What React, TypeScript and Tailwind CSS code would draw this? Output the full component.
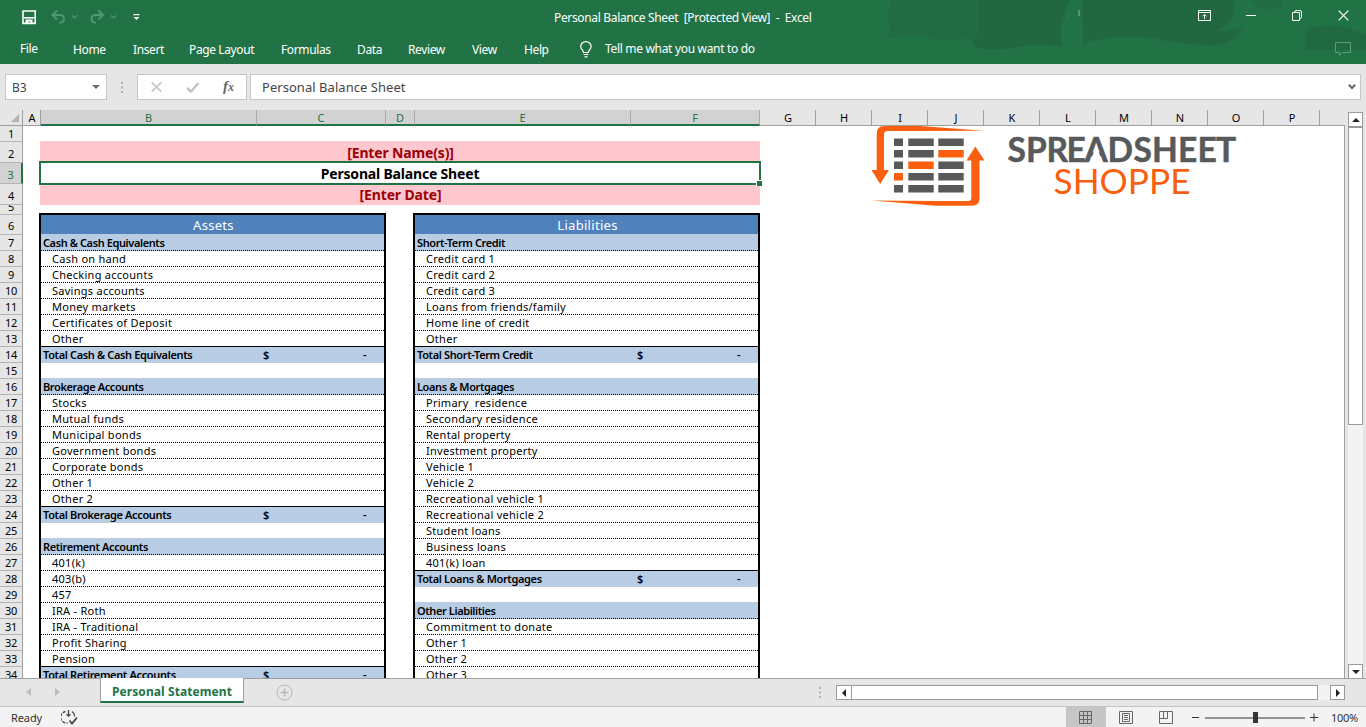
import React from "react";
import clsx from "clsx";

type RowKind = "head" | "item" | "last" | "total" | "blank";

interface ISheetRow {
  kind: RowKind;
  label?: string;
}

const section = (
  title: string,
  items: string[],
  total?: string
): ISheetRow[] => [
  { kind: "head", label: title },
  ...items.map((label, index) => ({
    kind: (total && index === items.length - 1 ? "last" : "item") as RowKind,
    label,
  })),
  ...(total
    ? [{ kind: "total" as RowKind, label: total }, { kind: "blank" as RowKind }]
    : []),
];

const assets: ISheetRow[] = [
  ...section(
    "Cash & Cash Equivalents",
    [
      "Cash on hand",
      "Checking accounts",
      "Savings accounts",
      "Money markets",
      "Certificates of Deposit",
      "Other",
    ],
    "Total Cash & Cash Equivalents"
  ),
  ...section(
    "Brokerage Accounts",
    [
      "Stocks",
      "Mutual funds",
      "Municipal bonds",
      "Government bonds",
      "Corporate bonds",
      "Other 1",
      "Other 2",
    ],
    "Total Brokerage Accounts"
  ),
  ...section(
    "Retirement Accounts",
    [
      "401(k)",
      "403(b)",
      "457",
      "IRA - Roth",
      "IRA - Traditional",
      "Profit Sharing",
      "Pension",
    ],
    "Total Retirement Accounts"
  ),
];

const liabilities: ISheetRow[] = [
  ...section(
    "Short-Term Credit",
    [
      "Credit card 1",
      "Credit card 2",
      "Credit card 3",
      "Loans from friends/family",
      "Home line of credit",
      "Other",
    ],
    "Total Short-Term Credit"
  ),
  ...section(
    "Loans & Mortgages",
    [
      "Primary  residence",
      "Secondary residence",
      "Rental property",
      "Investment property",
      "Vehicle 1",
      "Vehicle 2",
      "Recreational vehicle 1",
      "Recreational vehicle 2",
      "Student loans",
      "Business loans",
      "401(k) loan",
    ],
    "Total Loans & Mortgages"
  ),
  ...section("Other Liabilities", [
    "Commitment to donate",
    "Other 1",
    "Other 2",
    "Other 3",
  ]),
];

const menus = [
  { label: "File", width: "w-[53px]" },
  { label: "Home", width: "w-[60px]" },
  { label: "Insert", width: "w-[56px]" },
  { label: "Page Layout", width: "w-[92px]" },
  { label: "Formulas", width: "w-[76px]" },
  { label: "Data", width: "w-[51px]" },
  { label: "Review", width: "w-[64px]" },
  { label: "View", width: "w-[52px]" },
  { label: "Help", width: "w-[56px]" },
];

const columns = [
  { name: "A", width: "w-[18px]" },
  { name: "B", width: "w-[216px]", selected: true },
  { name: "C", width: "w-[129px]", selected: true },
  { name: "D", width: "w-[29px]", selected: true },
  { name: "E", width: "w-[216px]", selected: true },
  { name: "F", width: "w-[129px]", selected: true },
  ..."GHIJKLMNOP".split("").map((name) => ({
    name,
    width: "w-14",
    selected: false,
  })),
];

const rowHeights: Record<number, string> = {
  2: "h-[21px] leading-[16px]",
  3: "h-[21px] leading-[16px]",
  4: "h-[21px] leading-[16px]",
  5: "h-[10px] leading-[14px]",
  6: "h-5 leading-[16px]",
};

const TitleBar = () => (
  <header className="relative h-16 shrink-0 bg-[#217346] text-white font-['Noto_Sans',sans-serif] text-[12px]">
    <svg
      className="absolute right-0 top-0"
      width="486"
      height="64"
      viewBox="0 0 486 64"
    >
      <g fill="#21653f">
        <path opacity=".5" d="M12 0H98V38L60 40 38 36 6 38Q14 30 8 22Q6 12 12 0Z" />
        <path opacity=".85" d="M98 0H190Q178 20 182 47Q156 42 132 48Q104 52 94 46Q90 42 98 36Z" />
        <path opacity=".85" d="M202 0H354V12Q350 28 330 32L362 28Q358 42 334 46Q300 44 270 38Q230 34 203 44Z" />
        <path opacity=".5" d="M370 0H402V6L384 10Z" />
        <path opacity=".7" d="M425 30Q436 24 462 26L486 34V50H425Z" />
      </g>
      <path opacity=".45" fill="#8fc4a5" d="M198 10h2v6h-2z" />
      <path opacity=".15" fill="#8fc4a5" d="M188 12h1v8h-1z" />
    </svg>
    <div className="relative flex h-[34px] items-center">
      <div className="flex items-center pl-[21px]">
        <svg width="16" height="16" viewBox="0 0 16 16" fill="none">
          <path d="M2 2h12.200v12.400H2z" stroke="#fff" strokeWidth="1.600" />
          <path d="M3 8.800h10" stroke="#fff" strokeWidth="1.600" />
          <path d="M4.500 14.500V10.500h7v4H9.200v-2H7.500v2z" fill="#fff" />
        </svg>
        <svg className="ml-3.5" width="28" height="16" viewBox="0 0 28 16" fill="none" stroke="#4f9871">
          <path d="M6 1.500 1.500 6 6 10.500M2 6h7c5.300 0 5.500 7.500-.5 7.800" strokeWidth="2" />
          <path d="m21 6.500 2.500 2.500L26 6.500" strokeWidth="1.200" />
        </svg>
        <svg className="ml-[10px]" width="28" height="16" viewBox="0 0 28 16" fill="none" stroke="#4f9871">
          <path d="M9.500 1.500 14 6l-4.500 4.500M13.500 6h-7c-5.300 0-5.500 7.500.5 7.800" strokeWidth="2" />
          <path d="m22 6.500 2.500 2.500L27 6.500" strokeWidth="1.200" />
        </svg>
        <svg className="ml-4" width="7" height="8" viewBox="0 0 7 8">
          <path d="M.5 1h6v1.300h-6zM.5 4h6l-3 3z" fill="#fff" />
        </svg>
      </div>
      <p className="ml-[414px] w-[258px] whitespace-pre pt-[2px] tracking-[-0.34px]">
        {"Personal Balance Sheet  [Protected View]  -  Excel"}
      </p>
      <div className="ml-auto flex items-center pb-1 pr-[17px]">
        <svg width="13" height="11" viewBox="0 0 13 11" fill="none" stroke="#fff">
          <path d="M.5.5h12v10H.5zM.5 2.500h12M6.500 9V4.500M4.500 6.300l2-2 2 2" />
        </svg>
        <svg className="ml-[35px]" width="10" height="11" viewBox="0 0 10 11">
          <path d="M0 5h10v1H0z" fill="#fff" />
        </svg>
        <svg className="ml-9" width="10" height="11" viewBox="0 0 10 11" fill="none" stroke="#fff">
          <path d="M.5 2.500h7v8h-7zM2.500 2.500Q2.500.5 4 .5h4q1.500 0 1.500 1.500v5.500q0 1-2 1" />
        </svg>
        <svg className="ml-9" width="11" height="11" viewBox="0 0 11 11" fill="none" stroke="#fff">
          <path d="m.7.7 9.600 9.600M10.300.7.7 10.300" strokeWidth="1.200" />
        </svg>
      </div>
    </div>
    <nav className="relative flex h-[30px] items-center pl-5 tracking-[-0.38px]">
      {menus.map((menu) => (
        <button
          key={menu.label}
          type="button"
          className={clsx(
            "text-left whitespace-nowrap",
            menu.label !== "File" && "pt-[2px]",
            menu.width
          )}
        >
          {menu.label}
        </button>
      ))}
      <svg width="12" height="17" viewBox="0 0 12 17" fill="none" stroke="#fff">
        <path d="M3.500 11.500c0-2.500-2.800-3-2.800-6a5.100 4.800 0 0 1 10.400 0c0 3-2.800 3.500-2.800 6zM3.500 13.500h5M4.500 15.800h3" strokeWidth="1.200" />
      </svg>
      <span className="ml-[13px] tracking-[-0.32px]">
        Tell me what you want to do
      </span>
      <svg className="ml-auto mr-[15px]" width="16" height="14" viewBox="0 0 16 14" fill="none" stroke="#5b9b78">
        <path d="M.5.5h15v10H7.500l-3 3v-3h-4z" />
      </svg>
    </nav>
  </header>
);

const FormulaBar = () => (
  <div className="flex h-[46px] shrink-0 items-start pl-[5px] pr-[5px] pt-[10px] font-['Noto_Sans',sans-serif] text-[13px] text-[#444]">
    <div className="flex h-[26px] w-[102px] items-center justify-between border border-[#c6c6c6] bg-white pl-1.5 pr-1.5">
      <span className="pt-[2px] text-[12px]">B3</span>
      <svg width="8" height="4" viewBox="0 0 8 4">
        <path d="M0 0h8L4 4z" fill="#6d6d6d" />
      </svg>
    </div>
    <svg className="ml-[14px] mt-2" width="2" height="11" viewBox="0 0 2 11">
      <path d="M0 0h2v2H0zM0 4.500h2v2H0zM0 9h2v2H0z" fill="#b0b0b0" />
    </svg>
    <div className="ml-[14px] flex h-[26px] w-[110px] items-center border border-[#c6c6c6] bg-white pl-[13px]">
      <svg width="11" height="10" viewBox="0 0 11 10" fill="none" stroke="#c3c3c3" strokeWidth="1.700">
        <path d="m.7.5 9.600 9M10.300.5.7 9.500" />
      </svg>
      <svg className="ml-6" width="14" height="11" viewBox="0 0 14 11" fill="none" stroke="#c3c3c3" strokeWidth="2.400">
        <path d="m1 6 4 3.500L12.500 1" />
      </svg>
      <span className="ml-[23px] pb-px font-['Liberation_Serif',serif] text-[15px] font-bold italic leading-none text-[#666]">
        f<span className="text-[12px]">x</span>
      </span>
    </div>
    <div className="ml-[3px] flex h-[26px] flex-1 items-center justify-between border border-[#c6c6c6] bg-white pl-[11px] pr-1">
      <span className="pt-[2px] tracking-[0.04px]">Personal Balance Sheet</span>
      <svg width="8" height="6" viewBox="0 0 8 6" fill="none" stroke="#666" strokeWidth="2">
        <path d="m.8.8 3.200 3.200L7.200.8" />
      </svg>
    </div>
  </div>
);

const ColumnHeader = () => (
  <div className="flex h-4 w-[1345px] shrink-0 font-['Noto_Sans',sans-serif] text-[11px] leading-[16px]">
    <div className="flex h-4 w-[23px] items-end justify-end border-b border-r border-[#9f9f9f] pb-[3px] pr-[3px]">
      <svg width="8" height="8" viewBox="0 0 8 8">
        <path d="M8 0v8H0z" fill="#b4b4b4" />
      </svg>
    </div>
    {columns.map((column) => (
      <div
        key={column.name}
        className={clsx(
          "h-4 text-center",
          column.width,
          column.selected
            ? "border-b-2 border-b-[#217346] border-r border-r-[#a9a9a9] bg-[#d2d2d2] text-[#217346]"
            : "border-b border-r border-[#9f9f9f] pl-px text-black"
        )}
      >
        {column.name}
      </div>
    ))}
    <div className="h-4 flex-1 border-b border-[#9f9f9f]" />
  </div>
);

const RowHeader = () => (
  <div className="flex w-[23px] shrink-0 flex-col font-['Noto_Sans',sans-serif] text-[11px] tracking-[-0.2px]">
    {Array.from({ length: 34 }, (_, index) => index + 1).map((row) => (
      <div
        key={row}
        className={clsx(
          "flex shrink-0 items-end justify-center overflow-hidden border-b border-b-[#b5b5b5]",
          rowHeights[row] ?? "h-4 leading-[14px]",
          row === 3
            ? "border-r-2 border-r-[#217346] bg-[#d2d2d2] text-[#217346]"
            : "border-r border-r-[#9f9f9f] text-black"
        )}
      >
        {row}
      </div>
    ))}
  </div>
);

const SheetRow = ({ row }: { row: ISheetRow }) => {
  if (row.kind === "blank") return <div className="h-[15px]" />;
  if (row.kind === "head") {
    return (
      <div className="h-[17px] border-b border-dotted border-black bg-[#b8cce4] pl-[2px] text-[11px] font-semibold leading-[17px] tracking-[-0.4px]">
        {row.label}
      </div>
    );
  }
  if (row.kind === "total") {
    return (
      <div className="flex h-4 bg-[#b8cce4] pl-[2px] text-[11px] font-semibold leading-[16px] tracking-[-0.36px]">
        <span className="w-[220px]">{row.label}</span>
        <span className="w-[100px]">$</span>
        <span>-</span>
      </div>
    );
  }
  return (
    <div
      className={clsx(
        "h-4 whitespace-pre border-b border-black pl-[11px] text-[11px] leading-[15px] tracking-[0.27px]",
        row.kind === "item" && "border-dotted"
      )}
    >
      {row.label}
    </div>
  );
};

const SheetTable = ({ title, rows }: { title: string; rows: ISheetRow[] }) => (
  <section className="w-[347px] border-2 border-black">
    <h2 className="h-[19px] bg-[#4f81bd] pl-[2px] text-center text-[13px] leading-[20px] tracking-[0.3px] text-white">
      {title}
    </h2>
    {rows.map((row, index) => (
      <SheetRow key={`${index}-${row.label}`} row={row} />
    ))}
  </section>
);

const bars = [138.5, 150, 161.5, 173, 185];

const Logo = () => (
  <svg
    className="ml-28 shrink-0"
    width="366"
    height="82"
    viewBox="872 126 366 82"
  >
    <g fill="#f95f0e">
      <path d="M984 130.700 920 126H884q-7.300 0-7.300 7.500V170H871.500l8.700 14 8.700-14H884v-35.500q0-3.500 3.500-3.500H920z" />
      <path d="m872 200.500 64 5.300h36q7.500 0 7.500-7.500V160.500h5L975.300 146.500l-8.800 14h4.800V198q0 3-3 3H936z" />
    </g>
    {bars.map((y, index) => (
      <g key={y} fill="#58595b">
        <rect x="894" y={y} width="9" height="7.500" fill={index === 3 ? "#f95f0e" : undefined} />
        <rect x="908.300" y={y} width="25.400" height="7.500" fill={index === 2 ? "#f95f0e" : undefined} />
        <rect x="938.300" y={y} width="25.400" height="7.500" fill={index === 1 ? "#f95f0e" : undefined} />
      </g>
    ))}
    <text
      x="1007.500 1026 1046.500 1066.500 1084.500 1107.500 1133.500 1152 1178 1197.500 1216"
      y="161.700"
      stroke="#58595b"
      strokeWidth=".5"
      className="fill-[#58595b] font-['Lato',sans-serif] text-[33.500px] font-bold"
    >
      SPREADSHEET
    </text>
    {/* the A has no crossbar */}
    <path d="m1096.300 145 6.200 17.500h-12.400z" fill="#fff" />
    <text
      x="1053.500"
      y="193.500"
      textLength="137"
      lengthAdjust="spacingAndGlyphs"
      className="fill-[#f95f0e] font-['Lato',sans-serif] text-[34px]"
    >
      SHOPPE
    </text>
  </svg>
);

const Sheet = () => (
  <div className="flex h-[552px] w-[1322px] overflow-hidden border-r border-[#9f9f9f] bg-white font-['Noto_Sans',sans-serif] text-black">
    <div className="w-[737px] shrink-0 pl-4 pt-[15px]">
      <div className="ml-px text-center text-[14px] font-bold">
        <p className="h-5 bg-[#ffc7ce] pl-px leading-[24px] tracking-[-0.15px] text-[#9c0006]">
          [Enter Name(s)]
        </p>
        <div className="relative -ml-px -mr-px h-6 border-2 border-[#217346] bg-white leading-[22px] tracking-[-0.18px]">
          Personal Balance Sheet
          <span className="absolute -bottom-[3px] -right-[3px] h-[6px] w-[6px] border-l border-t border-white bg-[#217346]" />
        </div>
        <p className="h-5 bg-[#ffc7ce] pl-px leading-[20px] tracking-[-0.15px] text-[#9c0006]">
          [Enter Date]
        </p>
      </div>
      <div className="mt-2 flex gap-[27px]">
        <SheetTable title="Assets" rows={assets} />
        <SheetTable title="Liabilities" rows={liabilities} />
      </div>
    </div>
    <Logo />
  </div>
);

const VerticalScroll = () => (
  <div className="-mt-[14px] ml-[3px] flex h-[567px] w-[15px] flex-col bg-[#f3f3f3]">
    <div className="flex h-[15px] items-center justify-center border border-[#9a9a9a] bg-white">
      <svg width="8" height="4" viewBox="0 0 8 4">
        <path d="M4 0 8 4H0z" fill="#222" />
      </svg>
    </div>
    <div className="h-[298px] border border-[#9a9a9a] bg-white" />
    <div className="mt-auto flex h-[15px] items-center justify-center border border-[#9a9a9a] bg-white">
      <svg width="8" height="4" viewBox="0 0 8 4">
        <path d="M0 0h8L4 4z" fill="#222" />
      </svg>
    </div>
  </div>
);

const SheetTabs = () => (
  <div className="flex h-7 shrink-0 border-b border-[#c3c3c3]">
    <div className="-mt-px flex h-[29px] w-full items-start">
      <div className="flex h-7 w-[100px] items-center gap-[24px] border-t border-[#9f9f9f] pb-px pl-[26px]">
        <svg width="5" height="8" viewBox="0 0 5 8">
          <path d="M5 0v8L0 4z" fill="#bcbcbc" />
        </svg>
        <svg width="5" height="8" viewBox="0 0 5 8">
          <path d="M0 0v8l5-4z" fill="#bcbcbc" />
        </svg>
      </div>
      <div className="h-[25px] w-36 border-x border-b-2 border-x-[#9f9f9f] border-b-[#217346] bg-white text-center font-['Noto_Sans',sans-serif] text-[12px] font-bold leading-[27px] tracking-[0.08px] text-[#217346]">
        Personal Statement
      </div>
      <div className="flex h-7 flex-1 items-center border-t border-[#9f9f9f] pl-8">
        <svg width="17" height="17" viewBox="0 0 17 17" fill="none" stroke="#b9b9b9">
          <circle cx="8.500" cy="8.500" r="7.500" />
          <path d="M8.500 4.500v8M4.500 8.500h8" strokeWidth="1.500" />
        </svg>
        <svg className="ml-[526px]" width="2" height="11" viewBox="0 0 2 11">
          <path d="M0 0h2v2H0zM0 4.500h2v2H0zM0 9h2v2H0z" fill="#b0b0b0" />
        </svg>
        <div className="ml-[15px] flex h-[15px] w-[509px] bg-[#f3f3f3]">
          <div className="flex w-4 items-center justify-center border border-[#9a9a9a] bg-white">
            <svg width="4" height="8" viewBox="0 0 4 8">
              <path d="M4 0v8L0 4z" fill="#222" />
            </svg>
          </div>
          <div className="-ml-px w-[467px] border border-[#9a9a9a] bg-white" />
          <div className="ml-auto flex w-[15px] items-center justify-center border border-[#9a9a9a] bg-white">
            <svg width="4" height="8" viewBox="0 0 4 8">
              <path d="M0 0v8l4-4z" fill="#222" />
            </svg>
          </div>
        </div>
      </div>
    </div>
  </div>
);

const StatusBar = () => (
  <footer className="flex h-5 shrink-0 items-center bg-[#f3f3f3] pl-[11px] font-['Noto_Sans',sans-serif] text-[11px] text-[#333]">
    <span className="w-8 pt-[2px] tracking-[-0.1px]">Ready</span>
    <svg className="ml-[18px]" width="17" height="15" viewBox="0 0 17 15" fill="none" stroke="#444" strokeWidth="1.300">
      <path d="M4.500 1.500A5.800 5.800 0 0 0 6.500 13" strokeDasharray="3 1.200" />
      <path d="M7.500 0v6M5.500 4.200l2 2 2-2M11 1.500q2.500 1.500 2.700 5" />
      <path d="m8.500 10.500 2.500 3 5-6" strokeWidth="1.800" />
    </svg>
    <div className="ml-auto flex h-5 w-10 items-center justify-center bg-[#c6c6c6] pr-px">
      <svg width="13" height="13" viewBox="0 0 13 13" fill="none" stroke="#666">
        <path d="M.5.5h12v12H.5zM4.500.5v12M8.500.5v12M.5 4.500h12M.5 8.500h12" />
      </svg>
    </div>
    <svg className="ml-[13px]" width="14" height="13" viewBox="0 0 14 13" fill="none" stroke="#666">
      <path d="M.5.5h13v12H.5zM3.500 2.500h7v8h-7zM5 4.500h4M5 6.500h4M5 8.500h4" />
    </svg>
    <svg className="ml-[26px]" width="14" height="13" viewBox="0 0 14 13" fill="none" stroke="#666">
      <path d="M.5.5h13v12H.5zM.5 7.500h8v-7M4.500.5v7" />
    </svg>
    <svg className="ml-[19px]" width="126" height="13" viewBox="0 0 126 13" fill="#333">
      <path d="M0 6h7v1H0zM13 6.500h100v1H13zM61 1h5v11h-5zM118 6h8v1h-8zM121.500 2.500h1v8h-1z" />
    </svg>
    <span className="ml-[13px] w-[35px] pt-[2px] tracking-[-0.3px]">100%</span>
  </footer>
);

const App = () => (
  <main className="flex h-[727px] w-[1366px] flex-col overflow-hidden bg-[#e6e6e6]">
    <TitleBar />
    <FormulaBar />
    <ColumnHeader />
    <div className="flex h-[553px] shrink-0 border-b border-[#9f9f9f]">
      <div className="h-[552px] overflow-hidden">
        <RowHeader />
      </div>
      <Sheet />
      <VerticalScroll />
    </div>
    <SheetTabs />
    <StatusBar />
  </main>
);

export default App;
